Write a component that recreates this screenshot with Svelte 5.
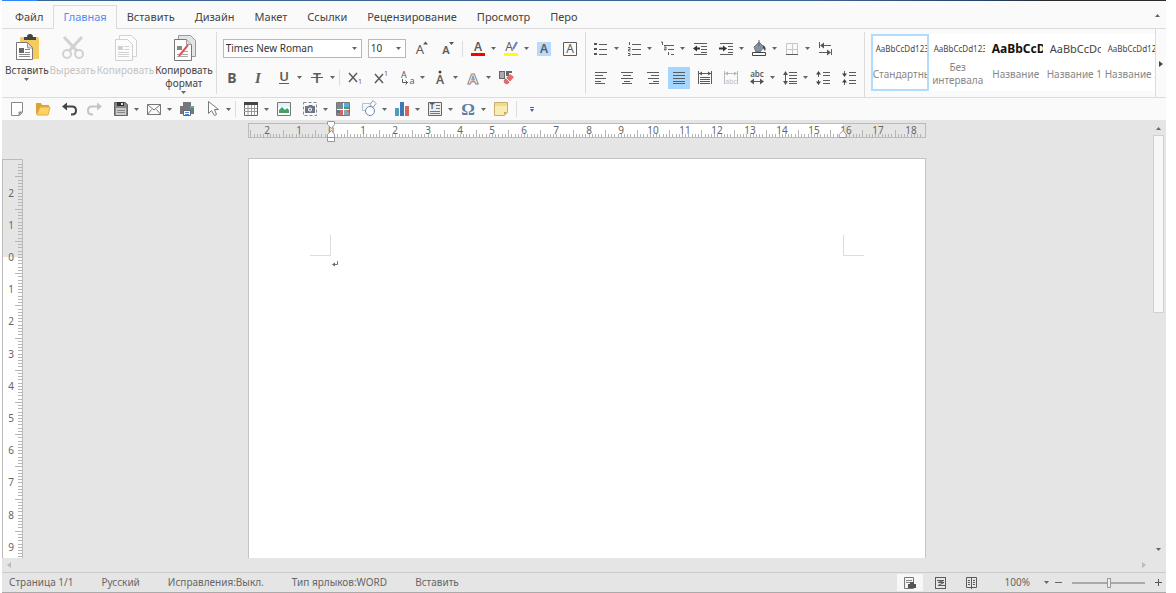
<script lang="ts">
  type Tool = { id: string; label: string; menu?: boolean; on?: boolean; off?: boolean }
  type Item = Tool | '|'

  const tabs = ['Файл', 'Главная', 'Вставить', 'Дизайн', 'Макет', 'Ссылки', 'Рецензирование', 'Просмотр', 'Перо']
  let activeTab = $state('Главная')
  let zoom = $state(100)
  let fontName = $state('Times New Roman')
  let fontSize = $state('10')
  let view = $state('print')
  let activeStyle = $state(0)
  let rulerHeight = $state(0)

  const fontTop: Item[] = [
    { id: 'grow', label: 'Увеличить шрифт' },
    { id: 'shrink', label: 'Уменьшить шрифт' },
    '|',
    { id: 'color', label: 'Цвет шрифта', menu: true },
    { id: 'marker', label: 'Цвет выделения', menu: true },
    { id: 'shade', label: 'Затенение знака' },
    { id: 'frame', label: 'Граница знака' },
  ]

  const fontBottom: Item[] = [
    { id: 'bold', label: 'Полужирный' },
    { id: 'italic', label: 'Курсив' },
    { id: 'underline', label: 'Подчёркнутый', menu: true },
    { id: 'strike', label: 'Зачёркнутый', menu: true },
    '|',
    { id: 'sub', label: 'Подстрочный' },
    { id: 'sup', label: 'Надстрочный' },
    { id: 'case', label: 'Регистр', menu: true },
    { id: 'accent', label: 'Знак ударения', menu: true },
    { id: 'effects', label: 'Эффекты', menu: true },
    { id: 'clear', label: 'Очистить формат' },
  ]

  const paraTop: Item[] = [
    { id: 'bullets', label: 'Маркеры', menu: true },
    { id: 'numbers', label: 'Нумерация', menu: true },
    { id: 'levels', label: 'Многоуровневый список', menu: true },
    { id: 'outdent', label: 'Уменьшить отступ' },
    { id: 'indent', label: 'Увеличить отступ', menu: true },
    { id: 'fill', label: 'Заливка', menu: true },
    { id: 'borders', label: 'Границы', menu: true },
    { id: 'tabstops', label: 'Табуляция' },
  ]

  const paraBottom: Item[] = [
    { id: 'left', label: 'По левому краю' },
    { id: 'center', label: 'По центру' },
    { id: 'right', label: 'По правому краю' },
    { id: 'justify', label: 'По ширине', on: true },
    { id: 'distribute', label: 'Распределить' },
    { id: 'fit', label: 'Вписать текст', off: true },
    { id: 'scale', label: 'Масштаб знаков', menu: true },
    { id: 'spacing', label: 'Междустрочный интервал', menu: true },
    { id: 'before', label: 'Увеличить интервал' },
    { id: 'after', label: 'Уменьшить интервал' },
  ]

  const quick: Item[] = [
    { id: 'new', label: 'Создать' },
    { id: 'open', label: 'Открыть' },
    { id: 'undo', label: 'Отменить' },
    { id: 'redo', label: 'Повторить', off: true },
    { id: 'save', label: 'Сохранить', menu: true },
    { id: 'mail', label: 'Отправить', menu: true },
    { id: 'print', label: 'Печать' },
    { id: 'select', label: 'Выделить', menu: true },
    '|',
    { id: 'table', label: 'Таблица', menu: true },
    { id: 'image', label: 'Рисунок' },
    { id: 'shot', label: 'Снимок экрана', menu: true },
    { id: 'clipart', label: 'Коллекция' },
    { id: 'shapes', label: 'Фигуры', menu: true },
    { id: 'chart', label: 'Диаграмма', menu: true },
    { id: 'textbox', label: 'Надпись', menu: true },
    { id: 'symbol', label: 'Символ', menu: true },
    { id: 'note', label: 'Примечание' },
    '|',
    { id: 'more', label: 'Настройка панели' },
  ]

  const clipboard = [
    { id: 'paste', lines: ['Вставить'], menu: true, off: false },
    { id: 'cut', lines: ['Вырезать'], menu: false, off: true },
    { id: 'copy', lines: ['Копировать'], menu: false, off: true },
    { id: 'painter', lines: ['Копировать', 'формат'], menu: true, off: false },
  ]

  const styles = [
    { sample: 'AaBbCcDd123', name: 'Стандартный', kind: 'small' },
    { sample: 'AaBbCcDd123', name: 'Без интервала', kind: 'small' },
    { sample: 'AaBbCcDd', name: 'Название', kind: 'title' },
    { sample: 'AaBbCcDd', name: 'Название 1', kind: 'large' },
    { sample: 'AaBbCcDd123', name: 'Название 2', kind: 'small' },
  ]

  const status = ['Страница 1/1', 'Русский', 'Исправления:Выкл.', 'Тип ярлыков:WORD', 'Вставить']

  const views = [
    { id: 'print', label: 'Разметка страницы' },
    { id: 'draft', label: 'Черновик' },
    { id: 'read', label: 'Режим чтения' },
  ]

  const ink = '#5c5c5c'
  const line = (d: string, w = 1, c = ink) => `<path d="${d}" fill="none" stroke="${c}" stroke-width="${w}"/>`
  const glyph = (s: string, x: number, y: number, size: number, extra = '') =>
    `<text x="${x}" y="${y}" font-size="${size}" text-anchor="middle" fill="${ink}" ${extra}>${s}</text>`

  const icons: Record<string, string> = {
    grow: glyph('A', 10, 16, 13) + '<path d="M13 6.500l2.500-3 2.500 3z" fill="#555"/>',
    shrink: glyph('A', 10, 16, 11, 'font-weight="600"') + '<path d="M13 4l2.500 3 2.500-3z" fill="#555"/>',
    color: glyph('A', 11, 13, 12, 'font-weight="600"') + '<path d="M4 15h14v3H4z" fill="#f00"/>',
    marker: glyph('A', 9, 13, 12) + '<path d="M4 15h14v3H4z" fill="#ff0"/>' + line('M13 11l4-7', 2, '#5a84c4') + line('M12 13l1-2', 1, '#e58a2c'),
    shade: '<path d="M4 4h14v14H4z" fill="#b9daff"/>' + glyph('A', 11, 15, 12, 'font-weight="600"'),
    frame: line('M4.500 4.500h13v13h-13z') + glyph('A', 11, 15, 12),
    bold: glyph('B', 11, 16, 14, 'font-weight="700"'),
    italic: glyph('I', 11, 16, 15, 'font-style="italic" font-family="Liberation Serif" font-weight="600"'),
    underline: glyph('U', 11, 14, 13, 'font-weight="600"') + line('M6 16.500h10'),
    strike: glyph('T', 11, 16, 14, 'font-weight="600"') + line('M5 10.500h12'),
    sub: line('M5 6l8 9M13 6l-8 9', 1.5) + glyph('1', 16, 17, 7),
    sup: line('M5 7l8 9M13 7l-8 9', 1.5) + glyph('1', 16, 9, 7),
    case: glyph('A', 8, 11, 9) + glyph('a', 16, 17, 9) + line('M6.500 12v3.500h5M9.500 13.500l2 2-2 2'),
    accent: glyph('A', 11, 17, 12, 'font-weight="600"') + '<circle cx="11" cy="5" r="1.500" fill="#444"/>',
    effects: '<text x="11" y="17" text-anchor="middle" font-size="15" font-weight="700" fill="#fff" stroke="#888" stroke-width="1">A</text>',
    clear: '<path d="M4 4h6v8H4zM11 4h6v2h-3v3h-3z" fill="#666"/><path d="M5 6h4M5 8h4M5 10h4" stroke="#eee"/><path d="M9 13l6-6 4 3-6 7c-2 1-5-1-4-4z" fill="#e76a6a"/><path d="M11 11l4 4" stroke="#fff"/>',
    bullets: '<path d="M4 5h3v2H4zM4 10h3v2H4zM4 15h3v2H4z" fill="#555"/>' + line('M9 6.500h8M9 11.500h8M9 16.500h8'),
    numbers: line('M9 6.500h9M9 11.500h9M9 16.500h9') + line('M6.500 4v3M5 9.500h2v2H5.500v1.500h2M5 15.500h2v2H5'),
    levels: line('M5 4h1.500v3M8 9h2v3H8.500v-1.500M12.500 14v3M8 7.500h10M12 11.500h6M15 16.500h3'),
    outdent: line('M5 5.500h13M12 8.500h6M12 11.500h6M12 14.500h6M5 16.500h13') + line('M6 10.500h5', 2, '#333') + '<path d="M4 10.500l4-3v6z" fill="#333"/>',
    indent: line('M5 5.500h13M13 8.500h5M13 11.500h5M13 14.500h5M5 16.500h13') + line('M4 10.500h5', 2, '#333') + '<path d="M12 10.500l-4-3v6z" fill="#333"/>',
    fill: '<path d="M6 9l5-5 5 5-4 5H8z" fill="#8592a3" stroke="#777"/><path d="M11 2v6" stroke="#666"/><path d="M15 7c3 2 3 4 2 6l-2-3z" fill="#444"/>' + '<path d="M4.500 14.500h13v3h-13z" fill="#fff" stroke="#444"/>',
    borders: line('M5.500 5.500h11v11h-11zM11.500 5v12M5 11.500h12', 1, '#c8c8c8') + line('M5 16.500h12'),
    tabstops: line('M5.500 4v6M7 7.500h10M17.500 11v6M5 14.500h11') + '<path d="M6 7.500l4-3v6zM17 14.500l-4-3v6z" fill="#555"/>',
    left: line('M5 5.500h12M5 8.500h8M5 11.500h11M5 14.500h6M5 16.500h10'),
    center: line('M5 5.500h12M7 8.500h8M5 11.500h12M8 14.500h6M6 16.500h10'),
    right: line('M5 5.500h12M9 8.500h8M6 11.500h11M11 14.500h6M7 16.500h10'),
    justify: line('M5 5.500h12M5 8.500h12M5 11.500h12M5 14.500h12M5 16.500h12'),
    distribute: line('M4.500 4v13M17.500 4v13M5 6.500h12M6 10.500h10M6 12.500h10M6 14.500h10M6 16.500h10') + '<path d="M5 6.500l3-2v4zM17 6.500l-3-2v4z" fill="#555"/>',
    fit: line('M4.500 4v13M17.500 4v13M5 6.500h12') + '<path d="M5 6.500l3-2v4zM17 6.500l-3-2v4z" fill="#555"/>' + glyph('abc', 11, 17, 7),
    scale: glyph('abc', 11, 10, 8, 'font-weight="600"') + line('M5 14.500h12') + '<path d="M4 14.500l4-3v6zM18 14.500l-4-3v6z" fill="#555"/>',
    spacing: line('M6.500 6v9M10 5.500h8M10 8.500h8M10 11.500h8M10 14.500h8M10 16.500h8') + '<path d="M6.500 4l-2.500 4h5zM6.500 18L4 14h5z" fill="#555"/>',
    before: line('M11 5.500h7M11 8.500h7M11 13.500h7M11 16.500h7M6.500 6v4M6.500 13v4') + '<path d="M6.500 4L4 7.500h5zM6.500 18L4 14.500h5z" fill="#444"/>',
    after: line('M11 5.500h7M11 8.500h7M11 13.500h7M11 16.500h7M6.500 4v4M6.500 14v4') + '<path d="M6.500 10L4 6.500h5zM6.500 12L4 15.500h5z" fill="#444"/>',
    new: '<path d="M5.500 4.500h11v10l-3 3h-8z" fill="#fff" stroke="#888"/><path d="M16 14h-3v3" fill="#888" stroke="#888"/>',
    open: '<path d="M4 17V5h5l1 2h7v3H8z" fill="#dca23a"/><path d="M5 17L8 9h10l-2 8z" fill="#ffd166" stroke="#e3ac45"/>',
    undo: line('M6 8.500h8c3 0 4 2 4 4s-1 4-4 4h-1', 2, '#444') + '<path d="M4 8.500l5-4v8z" fill="#444"/>',
    redo: line('M16 8.500H8c-3 0-4 2-4 4s1 4 4 4h1', 2, '#777') + '<path d="M18 8.500l-5-4v8z" fill="#777"/>',
    save: '<path d="M4.500 4.500h11l2 2v11h-13z" fill="#888" stroke="#666"/><path d="M7 4h7v4H7z" fill="#333"/><path d="M11 5h2v2h-2z" fill="#ddd"/><path d="M6 10h10v7H6z" fill="#ccc"/><path d="M7 12.500h8M7 14.500h8" stroke="#888"/>',
    mail: line('M4.500 6.500h13v10h-13zM4.500 6.500l6.500 5.500 6.500-5.500M4.500 16.500l4-5M17.500 16.500l-4-5', 1, '#777'),
    print: '<path d="M7 4h8v4H7z" fill="#777"/><path d="M4 8h14v8H4z" fill="#777"/><path d="M14 8h4v2h-4z" fill="#4bb3b8"/><path d="M7.500 12.500h7v5h-7z" fill="#fff" stroke="#667"/><path d="M9 14.500h4M9 16.500h4" stroke="#4c86d8"/>',
    select: '<path d="M6.500 3.500v12l3-3 3 5 2-1-2-5h4z" fill="#fff" stroke="#777"/>',
    table: '<path d="M4.500 4.500h13v13h-13z" fill="#fff" stroke="#666"/><path d="M4 4h14v3H4z" fill="#444"/>' + line('M8 7v10M11.500 7v10M14.500 7v10M4 10.500h13M4 13.500h13', 1, '#999'),
    image: '<path d="M4.500 4.500h13v13h-13z" fill="#fff" stroke="#777"/><path d="M5 5h12v4H5z" fill="#e3f3fc"/><path d="M6 15v-3l3-3 3 3 2-2 2 2v3z" fill="#42a06a"/>',
    shot: '<path d="M4.500 4.500h13v13h-13z" fill="none" stroke="#888" stroke-dasharray="3 2"/><path d="M6 8h3l1-1h3l1 1h2v7H6z" fill="#6d7886"/><circle cx="11" cy="11.500" r="2" fill="#fff"/><circle cx="11" cy="11.500" r="1" fill="#6d7886"/>',
    clipart: '<path d="M4.500 4.500h13v13h-13z" fill="#fff" stroke="#777"/><path d="M5 5h6v6H5z" fill="#7c8790"/><path d="M12 5h5v4h-5z" fill="#5ca9e0"/><path d="M12 9h5v2h-5z" fill="#4d9b63"/><path d="M5 12h6v5H5z" fill="#cf6a5b"/><path d="M5 12h3v3H5z" fill="#4a78a8"/><path d="M12 12h5v5h-5z" fill="#8ba7bd"/><path d="M14 12l3 3v-3z" fill="#cf6a5b"/>',
    shapes: '<path d="M4.500 5.500h8v7h-8z" fill="none" stroke="#b8bfc9"/><path d="M15 2.500l3 3-3 4-3-3z" fill="#fff" stroke="#8aa1c0"/><circle cx="12" cy="13" r="4.500" fill="#fff" stroke="#6889b8"/>',
    chart: '<path d="M4 10h4v8H4z" fill="#4c9fb8"/><path d="M9 4h4v14H9z" fill="#3f76b5"/><path d="M14 8h4v10h-4z" fill="#d3675a"/>',
    textbox: '<path d="M4.500 4.500h13v13h-13z" fill="#eee" stroke="#666"/>' + glyph('T', 8, 11, 8, 'font-weight="700"') + line('M12 7.500h4M12 10.500h4M6 13.500h10M6 15.500h10', 1, '#777'),
    symbol: '<text x="11" y="17" font-size="17" text-anchor="middle" font-family="Liberation Serif" font-weight="700" fill="#5b7fad">Ω</text>',
    note: '<path d="M4.500 4.500h13v10l-3 3h-10z" fill="#f8edb0" stroke="#c9ad6d"/><path d="M5 5h12v3H5z" fill="#f0dc8c"/><path d="M14 17v-3h3z" fill="#c9a55a"/>',
    more: '<path d="M9 9h4v1H9zM9 11h4l-2 3z" fill="#2f66ad"/>',
    paste: '<path d="M9 3h17a1 1 0 0 1 1 1v21H8V4z" fill="#f6cb5d"/><path d="M12 6V3h3a3 3 0 0 1 6 0h3v3z" fill="#444"/><path d="M4.500 8.500h11l5 5v12h-16z" fill="#fff" stroke="#777"/><path d="M15.500 9v5h5" fill="#ddd" stroke="#999"/><path d="M7 14h5v5H7z" fill="#666"/>' + line('M13 15.500h5M13 18.500h5M7 20.500h11M7 22.500h11', 1, '#888'),
    cut: line('M6 3l13 14M24 3L11 17', 3, '#aaa') + '<circle cx="9" cy="20" r="4" fill="none" stroke="#aaa" stroke-width="2"/><circle cx="21" cy="20" r="4" fill="none" stroke="#aaa" stroke-width="2"/>',
    copy: '<path d="M9.500 1.500h12l5 5v16h-17z" fill="#fff" stroke="#aaa"/><path d="M5.500 5.500h12l5 5v16h-17z" fill="#fff" stroke="#aaa"/><path d="M8 12h5v4H8z" fill="#aaa"/>' + line('M14 12.500h5M14 15.500h5M8 18.500h11M8 20.500h11M8 22.500h11', 1, '#aaa'),
    painter: '<path d="M9.500 1.500h12l5 5v16h-17z" fill="#e4e4e4" stroke="#999"/><path d="M5.500 5.500h12l5 5v16h-17z" fill="#fff" stroke="#777"/><path d="M17.500 5.500v5h5" fill="#ddd" stroke="#999"/><path d="M8 12h5v4H8z" fill="#888"/>' + line('M13 17.500h6M8 20.500h11M8 22.500h11', 1, '#aaa') + line('M10 22l9-11', 2, '#e05555'),
    printView: '<path d="M1.500 1.500h9v11h-9z" fill="#f4f4f4" stroke="#777"/><path d="M3 4.500h6M3 6.500h4" stroke="#888"/><path d="M5 8h8v4H5zM7 6h4v2H7z" fill="#555"/>',
    draftView: line('M1 1.500h11M1 12.500h11M1.500 1v12M11.500 1v12') + line('M3 4.500h7l-6 2h6l-6 3h7'),
    readView: line('M1.500 1.500h10v10h-10zM6.500 1v12M3 4.500h2M3 6.500h2M3 8.500h2M8 4.500h2M8 6.500h2M8 8.500h2'),
  }

  // one centimetre on either ruler, in pixels
  const cm = 32.2
  const hOrigin = 83
  const hEnd = hOrigin + 16 * cm - 3
  const hTicks = Array.from({ length: 210 }, (_, i) => i - 25).filter((n) => hOrigin + n * (cm / 10) < 675)
  const hLabels = Array.from({ length: 21 }, (_, i) => i - 2)
  const vOrigin = 98
  // the vertical ruler only holds what fits in the window
  let vTicks = $derived(Array.from({ length: Math.max(0, Math.floor((rulerHeight / cm) * 10)) }, (_, i) => i - 29))
  let vLabels = $derived(Array.from({ length: Math.max(0, Math.floor((rulerHeight - vOrigin - 5) / cm) + 3) }, (_, i) => i - 2))
  const isHalf = (n: number) => Math.abs(n) % 10 === 5
</script>

{#snippet caret()}
  <svg class="caret" viewBox="0 0 5 3" aria-hidden="true"><path d="M0 0h5L2.500 3z" /></svg>
{/snippet}

{#snippet toolRow(items: Item[])}
  {#each items as item}
    {#if item === '|'}
      <span class="divider"></span>
    {:else}
      <button class="tool" class:on={item.on} class:off={item.off} disabled={item.off} aria-label={item.label}>
        <svg class="icon" viewBox="0 0 22 22" aria-hidden="true">{@html icons[item.id]}</svg>
        {#if item.menu}{@render caret()}{/if}
      </button>
    {/if}
  {/each}
{/snippet}

<div class="app">
  <div class="title-strip"></div>

  <nav class="tabs">
    {#each tabs as tab}
      <button class="tab" class:active={tab === activeTab} onclick={() => (activeTab = tab)}>{tab}</button>
    {/each}
    <button class="collapse" aria-label="Свернуть ленту">
      <svg class="caret up" viewBox="0 0 5 3" aria-hidden="true"><path d="M0 0h5L2.500 3z" /></svg>
    </button>
  </nav>

  <div class="ribbon">
    <section class="clipboard">
      {#each clipboard as item}
        <button class="big" class:off={item.off} disabled={item.off}>
          <svg class="big-icon" viewBox="0 0 30 28" aria-hidden="true">{@html icons[item.id]}</svg>
          {#each item.lines as text}<span>{text}</span>{/each}
          {#if item.menu}{@render caret()}{/if}
        </button>
      {/each}
    </section>

    <section class="group">
      <div class="tool-row">
        <label class="combo font-combo">
          <select bind:value={fontName} aria-label="Шрифт">
            <option>Times New Roman</option>
            <option>Arial</option>
          </select>
          {@render caret()}
        </label>
        <label class="combo size-combo">
          <select bind:value={fontSize} aria-label="Размер шрифта">
            <option>10</option>
            <option>12</option>
          </select>
          {@render caret()}
        </label>
        {@render toolRow(fontTop)}
      </div>
      <div class="tool-row">{@render toolRow(fontBottom)}</div>
    </section>

    <section class="group">
      <div class="tool-row">{@render toolRow(paraTop)}</div>
      <div class="tool-row">{@render toolRow(paraBottom)}</div>
    </section>

    <section class="styles">
      <div class="gallery">
        {#each styles as style, i}
          <button class="style" class:active={i === activeStyle} onclick={() => (activeStyle = i)}>
            <span class="sample {style.kind}">{style.sample}</span>
            <span class="style-name" class:wrap={i === 1}>{style.name}</span>
          </button>
        {/each}
      </div>
      <button class="next" aria-label="Другие стили">
        <svg viewBox="0 0 4 6" aria-hidden="true"><path d="M0 0l4 3-4 3z" fill="#444" /></svg>
      </button>
    </section>
  </div>

  <div class="quick">{@render toolRow(quick)}</div>

  <main class="workspace">
    <div class="v-ruler" bind:clientHeight={rulerHeight}>
      <svg width="21" height={rulerHeight} aria-hidden="true">
        <rect width="21" height={rulerHeight} fill="#fff" />
        <rect width="21" height={vOrigin} fill="#e5e5e5" />
        {#each vTicks as n}
          <path d="M{isHalf(n) ? 13 : 16} {Math.round(vOrigin + (n * cm) / 10) + 0.5}H20" stroke="#b5b5b5" />
        {/each}
        {#each vLabels as n}
          <text x="9" y={Math.round(vOrigin + n * cm) + 4}>{Math.abs(n)}</text>
        {/each}
        <path d="M0 .5H20.500V{rulerHeight}M.5 0V{rulerHeight}" fill="none" stroke="#bbb" />
      </svg>
    </div>

    <div class="canvas">
      <svg class="h-ruler" width="678" height="24" aria-hidden="true">
        <rect x=".5" y="3.500" width="677" height="14" fill="#e5e5e5" stroke="#bbb" />
        <rect x={hOrigin} y="4" width={hEnd - hOrigin} height="13" fill="#fff" />
        {#each hTicks as n}
          <path d="M{Math.round(hOrigin + (n * cm) / 10) + 0.5} {isHalf(n) ? 10 : 14}V17" stroke="#b5b5b5" />
        {/each}
        {#each hLabels as n}
          <text x={Math.round(hOrigin + n * cm)} y="14">{Math.abs(n)}</text>
        {/each}
        <path d="M79.500 1.500h7v3l-3 4-4-4zM79.500 21.500v-7l4-4 3 4v7zM79.500 17.500h7" fill="#fff" stroke="#999" />
        <path d="M{hEnd - 4} 17.500v-3l4-4 3 4v3z" fill="#fff" stroke="#999" />
      </svg>
      <article class="page">
        <div class="corners">
          <span class="corner"></span>
          <span class="corner end"></span>
        </div>
        <svg class="pilcrow" viewBox="0 0 6 6" aria-hidden="true">
          <path d="M5.500 0v3.500H2" fill="none" stroke="#777" /><path d="M0 3.500l3-2v4z" fill="#666" />
        </svg>
      </article>
    </div>

    <div class="v-scroll">
      <svg class="caret up" viewBox="0 0 5 3" aria-hidden="true"><path d="M0 0h5L2.500 3z" /></svg>
      <span class="thumb"></span>
      {@render caret()}
    </div>
  </main>

  <div class="h-scroll">
    <svg viewBox="0 0 4 6" aria-hidden="true"><path d="M4 0v6L0 3z" fill="#bbb" /></svg>
    <svg viewBox="0 0 4 6" aria-hidden="true"><path d="M0 0v6l4-3z" fill="#bbb" /></svg>
  </div>

  <footer class="status">
    {#each status as text}<span>{text}</span>{/each}
    <div class="views">
      {#each views as v}
        <button class="view" class:active={v.id === view} aria-label={v.label} onclick={() => (view = v.id)}>
          <svg viewBox="0 0 13 14" aria-hidden="true">{@html icons[v.id + 'View']}</svg>
        </button>
      {/each}
    </div>
    <button class="zoom-value">{zoom}% {@render caret()}</button>
    <div class="zoom">
      <button aria-label="Мельче" onclick={() => (zoom -= 10)}>
        <svg viewBox="0 0 7 7" aria-hidden="true"><path d="M0 3.500h7" stroke="#666" /></svg>
      </button>
      <input type="range" min="0" max="200" bind:value={zoom} aria-label="Масштаб" />
      <button aria-label="Крупнее" onclick={() => (zoom += 10)}>
        <svg viewBox="0 0 7 7" aria-hidden="true"><path d="M0 3.500h7M3.500 0v7" stroke="#555" /></svg>
      </button>
    </div>
  </footer>
</div>

<style>
  :global(body) {
    background: #fff;
  }

  .app {
    box-sizing: border-box;
    height: 100vh;
    padding: 0 10px 0 2px;
    display: flex;
    flex-direction: column;
    font-family: "Noto Sans", "Open Sans", sans-serif;
    font-size: 10px;
    line-height: 13px;
    color: #444;
    overflow: hidden;
  }

  button, select {
    font: inherit;
    color: inherit;
    background: none;
    border: 0;
    border-radius: 0;
    padding: 0;
    margin: 0;
  }

  .caret {
    width: 5px;
    height: 3px;
    flex: none;
    fill: #666;
  }
  .caret.up { transform: rotate(180deg); }

  .title-strip {
    height: 1px;
    flex: none;
    background: linear-gradient(to right, #2f86ff 3%, #3d6294 3%, #3d6294 70%, #24446e 84%, #2a2a2a 90%);
  }

  .tabs {
    box-sizing: border-box;
    flex: none;
    height: 28px;
    padding: 4px 6px 0 3px;
    display: flex;
    background: #fafafa;
    border-bottom: 1px solid #dcdcdc;
    font-size: 11px;
  }
  .tab {
    height: 24px;
    padding: 0 9px 2px;
    border: 1px solid transparent;
    border-bottom: 0;
  }
  .tab.active {
    color: #4f8df5;
    background: #fafafa;
    border-color: #dcdcdc;
  }
  .collapse {
    margin-left: auto;
    display: flex;
    align-items: center;
    height: 20px;
  }

  .ribbon {
    flex: none;
    height: 68px;
    display: flex;
    background: #fafafa;
    border-bottom: 1px solid #dcdcdc;
  }

  .clipboard {
    display: flex;
    gap: 1px;
    padding: 5px 3px 0;
  }
  .big {
    display: flex;
    flex-direction: column;
    align-items: center;
    justify-content: flex-start;
  }
  .big-icon {
    width: 30px;
    height: 28px;
    margin-bottom: 2px;
  }
  .big .caret { margin-top: 1px; }
  .big.off { color: #c4c4c4; }
  .big.off svg { opacity: 0.5; }

  .group {
    display: flex;
    flex-direction: column;
    justify-content: center;
    gap: 7px;
    padding: 0 4px;
    border-left: 1px solid #dcdcdc;
    margin: 3px 0;
  }
  .tool-row, .quick {
    display: flex;
    align-items: center;
    gap: 4px;
  }
  .tool {
    display: flex;
    align-items: center;
    gap: 2px;
  }
  .icon {
    width: 22px;
    height: 22px;
    flex: none;
  }
  .tool.on { background: #a6d5fd; }
  .tool.off { opacity: 0.4; }
  .divider {
    width: 1px;
    height: 16px;
    background: #ddd;
  }

  .combo {
    box-sizing: border-box;
    height: 19px;
    display: flex;
    align-items: center;
    padding: 0 4px 0 2px;
    background: #fff;
    border: 1px solid #b8b8b8;
  }
  .combo select {
    flex: 1;
    min-width: 0;
    appearance: none;
    color: #333;
  }
  .font-combo {
    width: 139px;
    margin: 0 2px;
  }
  .size-combo { width: 38px; }

  .styles {
    flex: 1;
    min-width: 0;
    display: flex;
    border-left: 1px solid #dcdcdc;
    margin-top: 3px;
  }
  .gallery {
    flex: 1;
    min-width: 0;
    height: 57px;
    margin: 2px 0 0 6px;
    display: flex;
    overflow: hidden;
    background: #fff;
  }
  .style {
    box-sizing: border-box;
    width: 58px;
    flex: none;
    display: grid;
    grid-template-rows: 25px 1fr;
    grid-template-columns: 100%;
    justify-items: center;
    align-items: center;
    overflow: hidden;
    border: 2px solid transparent;
    padding-bottom: 2px;
    color: #888;
  }
  .style.active { border-color: #b0dcfd; }
  .sample {
    box-sizing: border-box;
    width: 54px;
    padding-left: 3px;
    text-align: left;
    overflow: hidden;
    white-space: nowrap;
    color: #444;
    font-size: 8px;
  }
  .sample.title {
    font-size: 12px;
    font-weight: 700;
    color: #111;
  }
  .sample.large { font-size: 11px; }
  .style-name {
    max-width: 100%;
    overflow: hidden;
    white-space: nowrap;
  }
  .style-name.wrap { white-space: normal; }
  .next {
    width: 11px;
    margin-top: -3px;
    border-left: 1px solid #dcdcdc;
  }
  .next svg {
    width: 4px;
    height: 6px;
  }

  .quick {
    flex: none;
    height: 22px;
    padding-left: 4px;
    background: #fafafa;
  }

  .workspace {
    flex: 1;
    min-height: 0;
    display: flex;
    background: #e5e5e5;
    overflow: hidden;
  }
  .workspace text {
    font-size: 10px;
    text-anchor: middle;
    fill: #666;
  }
  .v-ruler {
    width: 21px;
    margin-top: 39px;
    overflow: hidden;
  }
  .v-ruler svg { display: block; }
  .canvas {
    flex: 1;
    display: flex;
    flex-direction: column;
    align-items: center;
    overflow: hidden;
  }
  .h-ruler {
    flex: none;
    margin-bottom: 14px;
  }
  .page {
    box-sizing: border-box;
    width: 678px;
    flex: 1;
    padding: 76px 61px 0;
    background: #fff;
    border: 1px solid #c4c4c4;
    border-bottom: 0;
  }
  .corners {
    display: flex;
    justify-content: space-between;
  }
  .corner {
    width: 20px;
    height: 20px;
    border: solid #ddd;
    border-width: 0 1px 1px 0;
  }
  .corner.end { border-width: 0 0 1px 1px; }
  .pilcrow {
    display: block;
    width: 6px;
    height: 6px;
    margin: 5px 22px;
  }
  .v-scroll {
    width: 15px;
    padding: 7px 0;
    display: flex;
    flex-direction: column;
    align-items: center;
  }
  .thumb {
    box-sizing: border-box;
    width: 11px;
    height: 42%;
    margin: 5px 0 auto;
    background: #f7f7f7;
    border: 1px solid #d0d0d0;
  }

  .h-scroll {
    flex: none;
    height: 14px;
    padding: 0 20px 0 5px;
    display: flex;
    align-items: center;
    justify-content: space-between;
    background: #e5e5e5;
    border-bottom: 1px solid #ccc;
  }
  .h-scroll svg {
    width: 4px;
    height: 6px;
  }

  .status {
    flex: none;
    height: 19px;
    padding: 0 4px 0 7px;
    display: flex;
    align-items: center;
    gap: 28px;
    background: #e5e5e5;
    border-bottom: 1px solid #aaa;
    color: #666;
  }
  .views {
    margin-left: auto;
    display: flex;
    gap: 5px;
  }
  .view {
    width: 26px;
    height: 17px;
    display: grid;
    place-items: center;
  }
  .view.active { background: #f7f7f7; }
  .view svg {
    width: 13px;
    height: 14px;
  }
  .views + .zoom-value { margin-left: -8px; }
  .zoom-value {
    display: flex;
    align-items: center;
    gap: 14px;
  }
  .zoom {
    display: flex;
    align-items: center;
    gap: 10px;
    margin-left: -22px;
  }
  .zoom button {
    display: flex;
    width: 7px;
  }
  .zoom svg {
    width: 7px;
    height: 7px;
  }
  .zoom input {
    appearance: none;
    width: 73px;
    height: 11px;
    margin: 0;
    background: linear-gradient(#aaa, #aaa) center / 100% 2px no-repeat;
  }
  .zoom input::-webkit-slider-thumb {
    appearance: none;
    box-sizing: border-box;
    width: 4px;
    height: 10px;
    background: #eee;
    border: 1px solid #999;
  }
</style>
